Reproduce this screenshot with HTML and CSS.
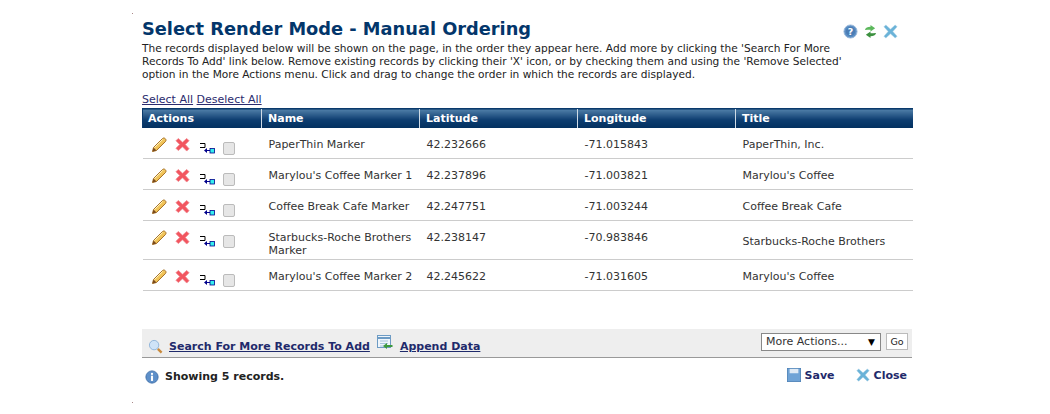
FILE: index.html
```html
<!DOCTYPE html>
<html lang="en">
<head>
<meta charset="utf-8">
<title>Select Render Mode - Manual Ordering</title>
<link rel="stylesheet" href="styles.css">
</head>
<body>
<svg class="defs" width="0" height="0" aria-hidden="true">
  <defs>
    <linearGradient id="pencil" x1="0" y1="0" x2="1" y2="1"><stop offset="0" stop-color="#ffe58a"/><stop offset="1" stop-color="#e3a52e"/></linearGradient>
    <symbol id="i-edit" viewBox="0 0 16 16">
      <path d="M1.500 14.500l1-4L11.500 1.500c1-.8 2-.6 2.800.2s1 1.800.2 2.800L5.500 13.500z" fill="url(#pencil)" stroke="#a8742a" stroke-width="1"/>
      <path d="M1.500 14.500l1-4 3 3z" fill="#7a4a1c"/>
      <path d="M3.500 10.500l8-8" stroke="#fff3c0" stroke-width="1"/>
    </symbol>
    <symbol id="i-del" viewBox="0 0 16 16">
      <path d="M3.500 1.500L8 5.500l4.500-4 2.500 2.500-4 4 4 4.500-2.500 2.500L8 10.500l-4.500 4L1 12l4-4-4-4z" fill="#f2555f" stroke="#f08a90" stroke-width=".8"/>
    </symbol>
    <symbol id="i-move" viewBox="0 0 16 12">
      <path d="M1 0.500h5v4h-5" fill="none" stroke="#000" stroke-width="1"/>
      <path d="M5 7.500l3-2.500v2h3v1H8v2z" fill="#00008b"/>
      <rect x="11" y="5.500" width="4.500" height="4.500" fill="#3ee" stroke="#00008b" stroke-width=".8"/>
    </symbol>
    <symbol id="i-help" viewBox="0 0 16 16">
      <circle cx="8" cy="8" r="7" fill="#5d8fc4" stroke="#9dbbdc"/>
      <circle cx="8" cy="8" r="5" fill="#4a7db5"/>
      <text x="8" y="11.500" text-anchor="middle" class="icon-q">?</text>
    </symbol>
    <symbol id="i-refresh" viewBox="0 0 14 16">
      <path d="M1 6.500c.5-2.500 3-3.500 6-3.500V1l5 3.500L7 8V6C5 6 3 6 1 6.500z" fill="#5cb85c"/>
      <path d="M13 9.500c-.5 2.500-3 3.500-6 3.500v2L2 11.500 7 8v2c2 0 4 0 6-.5z" fill="#3d9140"/>
    </symbol>
    <symbol id="i-close" viewBox="0 0 16 16">
      <path d="M3 1l5 4.500L13 1l2 2-4.500 5 4.500 5-2 2-5-4.500L3 15l-2-2 4.500-5L1 3z" fill="#6bb3d8" stroke="#a5d0e6" stroke-width=".6"/>
    </symbol>
    <symbol id="i-search" viewBox="0 0 16 16">
      <circle cx="6.500" cy="6.500" r="5" fill="#cfe3f7" stroke="#8fb3d9"/>
      <path d="M10.500 10.500l4 4" stroke="#c98a3c" stroke-width="2.500"/>
    </symbol>
    <symbol id="i-append" viewBox="0 0 16 16">
      <rect x="0.500" y="0.500" width="13" height="12" fill="#eef5fb" stroke="#6d9bc4"/>
      <path d="M1 3h12" stroke="#6d9bc4" stroke-width="2"/>
      <path d="M3 6h8M3 8.500h8M3 11h8" stroke="#a8c4dc"/>
      <path d="M6 11l4-3v2h5.500v2H10v2z" fill="#3d9a3d"/>
    </symbol>
    <symbol id="i-info" viewBox="0 0 16 16">
      <circle cx="8" cy="8" r="7" fill="#5d8fc9" stroke="#3f6fa8"/>
      <circle cx="8" cy="4.500" r="1.300" fill="#fff"/>
      <rect x="6.800" y="6.500" width="2.400" height="6" fill="#fff"/>
    </symbol>
    <symbol id="i-save" viewBox="0 0 16 16">
      <rect x="0.500" y="0.500" width="15" height="15" fill="#6fa3d6" stroke="#4f83b8"/>
      <rect x="3" y="1" width="10" height="5" fill="#dfeaf5"/>
    </symbol>
  </defs>
</svg>
<span class="speck speck-top"></span>
<span class="speck speck-bottom"></span>

<main class="dialog">
  <header class="head">
    <h1 class="title">Select Render Mode - Manual Ordering</h1>
    <div class="head-icons">
      <svg class="ic-help"><use href="#i-help"/></svg>
      <svg class="ic-refresh"><use href="#i-refresh"/></svg>
      <svg class="ic-close"><use href="#i-close"/></svg>
    </div>
  </header>
  <p class="intro">The records displayed below will be shown on the page, in the order they appear here. Add more by clicking the 'Search For More<br>Records To Add' link below. Remove existing records by clicking their 'X' icon, or by checking them and using the 'Remove Selected'<br>option in the More Actions menu. Click and drag to change the order in which the records are displayed.</p>
  <div class="select-links"><a href="#">Select All</a> <a href="#">Deselect All</a></div>

  <table class="grid">
    <colgroup><col class="c1"><col class="c2"><col class="c3"><col class="c4"><col class="c5"></colgroup>
    <thead>
      <tr><th>Actions</th><th>Name</th><th>Latitude</th><th>Longitude</th><th>Title</th></tr>
    </thead>
    <tbody>
      <tr>
        <td class="acts"><div class="act-row"><svg class="a-edit"><use href="#i-edit"/></svg><svg class="a-del"><use href="#i-del"/></svg><svg class="a-move"><use href="#i-move"/></svg><span class="check"></span></div></td>
        <td>PaperThin Marker</td><td>42.232666</td><td>-71.015843</td><td class="low">PaperThin, Inc.</td>
      </tr>
      <tr>
        <td class="acts"><div class="act-row"><svg class="a-edit"><use href="#i-edit"/></svg><svg class="a-del"><use href="#i-del"/></svg><svg class="a-move"><use href="#i-move"/></svg><span class="check"></span></div></td>
        <td>Marylou's Coffee Marker 1</td><td>42.237896</td><td>-71.003821</td><td class="low">Marylou's Coffee</td>
      </tr>
      <tr>
        <td class="acts"><div class="act-row"><svg class="a-edit"><use href="#i-edit"/></svg><svg class="a-del"><use href="#i-del"/></svg><svg class="a-move"><use href="#i-move"/></svg><span class="check"></span></div></td>
        <td>Coffee Break Cafe Marker</td><td>42.247751</td><td>-71.003244</td><td class="low">Coffee Break Cafe</td>
      </tr>
      <tr>
        <td class="acts"><div class="act-row"><svg class="a-edit"><use href="#i-edit"/></svg><svg class="a-del"><use href="#i-del"/></svg><svg class="a-move"><use href="#i-move"/></svg><span class="check"></span></div></td>
        <td>Starbucks-Roche Brothers<br>Marker</td><td>42.238147</td><td>-70.983846</td><td class="low">Starbucks-Roche Brothers</td>
      </tr>
      <tr>
        <td class="acts"><div class="act-row"><svg class="a-edit"><use href="#i-edit"/></svg><svg class="a-del"><use href="#i-del"/></svg><svg class="a-move"><use href="#i-move"/></svg><span class="check"></span></div></td>
        <td>Marylou's Coffee Marker 2</td><td>42.245622</td><td>-71.031605</td><td class="low">Marylou's Coffee</td>
      </tr>
    </tbody>
  </table>

  <div class="toolbar">
    <div class="tool-links">
      <svg class="t-search"><use href="#i-search"/></svg>
      <a href="#">Search For More Records To Add</a>
      <svg class="t-append"><use href="#i-append"/></svg>
      <a href="#">Append Data</a>
    </div>
    <div class="tool-actions">
      <span class="select-box">More Actions...<span class="caret">▼</span></span>
      <span class="go">Go</span>
    </div>
  </div>

  <footer class="foot">
    <div class="status"><svg class="f-info"><use href="#i-info"/></svg><strong>Showing 5 records.</strong></div>
    <div class="foot-actions">
      <a href="#"><svg class="f-save"><use href="#i-save"/></svg>Save</a>
      <a href="#"><svg class="f-close"><use href="#i-close"/></svg>Close</a>
    </div>
  </footer>
</main>
</body>
</html>
```
FILE: styles.css
```css
* { box-sizing: border-box; }
html, body { margin: 0; padding: 0; background: #fff; }
body { position: relative; font-family: "DejaVu Sans", Verdana, sans-serif; font-size: 11px; color: #333; height: 414px; overflow: hidden; }
.defs { display: block; height: 0; }
.speck { position: absolute; left: 132px; width: 1px; height: 1px; background: #a88; }
.speck-top { top: 13px; }
.speck-bottom { top: 402px; }
.icon-q { font: bold 10px "DejaVu Sans", sans-serif; fill: #fff; }
.dialog { width: 770px; margin-left: 142px; padding-top: 17px; }
.head { display: flex; justify-content: space-between; align-items: flex-start; height: 25px; }
.title { margin: 0; font-size: 17.8px; line-height: 24px; font-weight: bold; color: #03366b; white-space: nowrap; }
.head-icons { display: flex; align-items: center; gap: 6px; margin: 7px 14px 0 0; }
.ic-help { width: 15px; height: 15px; }
.ic-refresh { width: 13px; height: 15px; }
.ic-close { width: 15px; height: 15px; }
.intro { margin: 0; font-size: 10.6px; line-height: 13px; color: #222; white-space: nowrap; }
.select-links { margin-top: 11px; height: 16px; line-height: 15px; font-size: 11px; }
.select-links a { color: #2b2b6e; }
.grid { border-collapse: collapse; table-layout: fixed; width: 770px; }
.c1 { width: 119px; } .c2, .c3, .c4 { width: 158px; } .c5 { width: 177px; }
.grid th { height: 19px; padding: 0 0 0 6px; text-align: left; font-size: 11px; font-weight: bold; color: #fff; background: linear-gradient(#4f7ea8, #0d3d70 55%, #02305f); border-top: 1px solid #0a3a6c; border-left: 1px solid #cfdbe6; line-height: 17px; }
.grid th:first-child { border-left: 1px solid #0a3a6c; padding-left: 5px; }
.grid td { padding: 10px 4px 2px 7px; vertical-align: top; line-height: 13px; border-bottom: 1px solid #ccc; font-size: 11px; color: #333; }
.grid td.low { padding-top: 4px; padding-bottom: 0; vertical-align: middle; }
.grid td.acts { padding: 0 0 0 8px; vertical-align: top; }
.act-row { display: flex; align-items: flex-start; padding-top: 9px; height: 30px; }
.a-edit { width: 16px; height: 16px; flex: none; }
.a-del { width: 15px; height: 15px; margin-left: 8px; flex: none; }
.a-move { width: 16px; height: 12px; margin: 6px 0 0 9px; flex: none; }
.check { width: 12px; height: 13px; margin: 5px 0 0 8px; border: 1px solid #bbb; border-radius: 2px; background: #e6e6e6; flex: none; }
.toolbar { display: flex; justify-content: space-between; align-items: center; height: 29px; margin-top: 38px; background: #eee; border-bottom: 1px solid #999; }
.tool-links { display: flex; align-items: center; padding: 7px 0 0 6px; font-weight: bold; font-size: 11px; }
.tool-links a { color: #1f2a6b; }
.t-search { width: 15px; height: 15px; margin-right: 6px; }
.t-append { width: 16px; height: 16px; margin: -6px 7px 0 7px; }
.tool-actions { display: flex; align-items: center; gap: 5px; padding: 0 4px 2px 0; }
.select-box { display: flex; justify-content: space-between; align-items: center; width: 120px; height: 18px; padding: 0 5px 0 4px; background: #fff; border: 1px solid #888; font-size: 11px; }
.caret { font-size: 9px; color: #000; }
.go { display: flex; align-items: center; justify-content: center; width: 22px; height: 17px; background: #fff; border: 1px solid #bbb; font-size: 9.5px; color: #222; }
.foot { display: flex; justify-content: space-between; align-items: center; height: 38px; padding: 0 5px 0 3px; }
.status { display: flex; align-items: center; gap: 6px; }
.status strong { font-size: 11px; color: #222; }
.f-info { width: 14px; height: 14px; }
.foot-actions { display: flex; align-items: center; gap: 21px; margin-bottom: 3px; }
.foot-actions a { display: flex; align-items: center; gap: 4px; font-size: 11px; font-weight: bold; color: #1f2a6b; text-decoration: none; }
.f-save, .f-close { width: 14px; height: 14px; }
```
